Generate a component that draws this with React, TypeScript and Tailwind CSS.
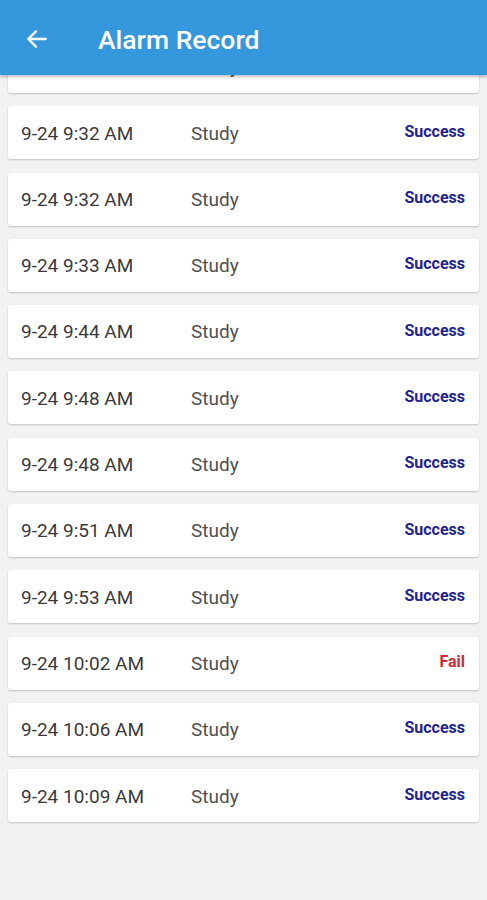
import React from "react";

const rows: [string, string, boolean][] = [
  ["9-24 9:31 AM", "Study", true],
  ["9-24 9:32 AM", "Study", true],
  ["9-24 9:32 AM", "Study", true],
  ["9-24 9:33 AM", "Study", true],
  ["9-24 9:44 AM", "Study", true],
  ["9-24 9:48 AM", "Study", true],
  ["9-24 9:48 AM", "Study", true],
  ["9-24 9:51 AM", "Study", true],
  ["9-24 9:53 AM", "Study", true],
  ["9-24 10:02 AM", "Study", false],
  ["9-24 10:06 AM", "Study", true],
  ["9-24 10:09 AM", "Study", true],
];

export default function App() {
  return (
    <div
      className="w-[487px] h-[900px] bg-[#f2f2f2] overflow-hidden relative"
      style={{ fontFamily: "Roboto, 'Noto Sans', sans-serif" }}
    >
      <div className="relative z-10 h-[75px] bg-[#3597dc] flex items-center shadow-[0_2px_3px_rgba(0,0,0,0.25)]">
        <svg className="ml-[24px] mt-[2px]" width="26" height="26" viewBox="0 0 24 24" fill="none">
          <path d="M20 12H4.5M11 5l-7 7 7 7" stroke="white" strokeWidth="2.2" strokeLinecap="round" strokeLinejoin="round" />
        </svg>
        <div className="ml-[48px] text-white text-[26.5px] font-medium mt-[4px]">Alarm Record</div>
      </div>
      <div className="flex flex-col gap-[13.3px] px-[8px] mt-[-35px]">
        {rows.map(([t, n, ok], i) => (
          <div
            key={i}
            className="h-[53px] bg-white rounded-[3px] shadow-[0_1px_2px_rgba(0,0,0,0.2)] flex items-center pl-[13px] pr-[14px]"
          >
            <div className="w-[170px] text-[19px] text-[#3a3a3a] mt-[2px]">{t}</div>
            <div className="flex-1 text-[19px] text-[#505050] mt-[2px]">{n}</div>
            <div className={"text-[16px] font-bold mt-[-2px] " + (ok ? "text-[#23238f]" : "text-[#d02a35]")}>
              {ok ? "Success" : "Fail"}
            </div>
          </div>
        ))}
      </div>
    </div>
  );
}
